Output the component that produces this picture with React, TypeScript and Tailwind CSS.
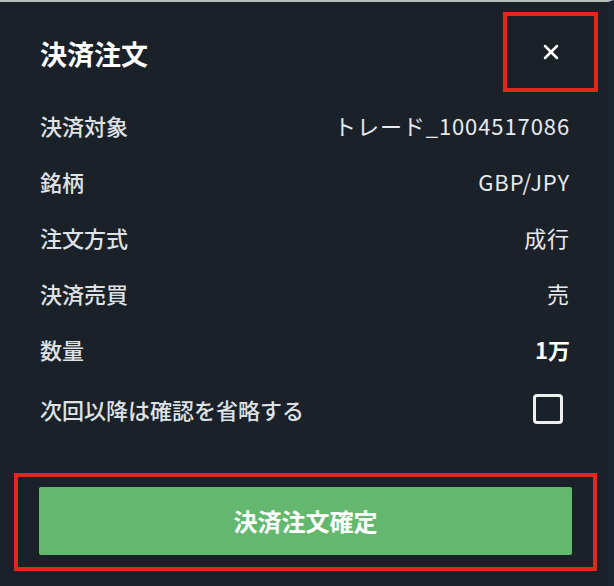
import { X } from 'lucide-react';

const rows: { label: string; value: string; bold?: boolean }[] = [
  { label: '決済対象', value: 'トレード_1004517086' },
  { label: '銘柄', value: 'GBP/JPY' },
  { label: '注文方式', value: '成行' },
  { label: '決済売買', value: '売' },
  { label: '数量', value: '1万', bold: true },
];

export default function App() {
  return (
    <div
      className="flex h-[586px] w-[614px] flex-col border-t-2 border-r-[6px] border-t-[#b9bcbf] border-r-[#1c2431] bg-[#1b2129] text-[#e6e8ea]"
      style={{ fontFamily: '"Noto Sans CJK JP", "Noto Sans", sans-serif' }}
    >
      {/* header */}
      <div className="flex h-[95px] items-start justify-between pt-[10px] pl-[40px] pr-[10px]">
        <h1 className="mt-[28px] text-[27px] leading-none font-bold text-white">決済注文</h1>
        <button className="flex h-[80px] w-[95px] items-center justify-center border-4 border-[#e2271c]">
          <X className="h-[24px] w-[24px] text-white" strokeWidth={2.5} />
        </button>
      </div>

      {/* details */}
      <div className="flex flex-col pl-[40px] pr-[38px]">
        {rows.map((r) => (
          <div key={r.label} className="flex h-[56px] items-center justify-between text-[22px]">
            <span className="font-medium text-[#dfe2e5]">{r.label}</span>
            <span className={r.bold ? 'font-bold text-white' : 'text-[#e8eaec] tracking-[0.9px]'}>{r.value}</span>
          </div>
        ))}
        <div className="flex h-[64px] items-center justify-between text-[22px]">
          <span className="font-medium text-[#dfe2e5]">次回以降は確認を省略する</span>
          <span className="mr-[7px] block h-[30px] w-[30px] rounded-[4px] border-[3px] border-[#eceeef]" />
        </div>
      </div>

      {/* confirm */}
      <div className="mt-[32px] ml-[14px] mr-[11px] border-4 border-[#e2271c] px-[21px] pt-[10px] pb-[12px]">
        <button className="flex h-[68px] w-full items-center justify-center rounded-[2px] bg-[#64b76e] text-[24px] font-bold text-white">
          決済注文確定
        </button>
      </div>
    </div>
  );
}
